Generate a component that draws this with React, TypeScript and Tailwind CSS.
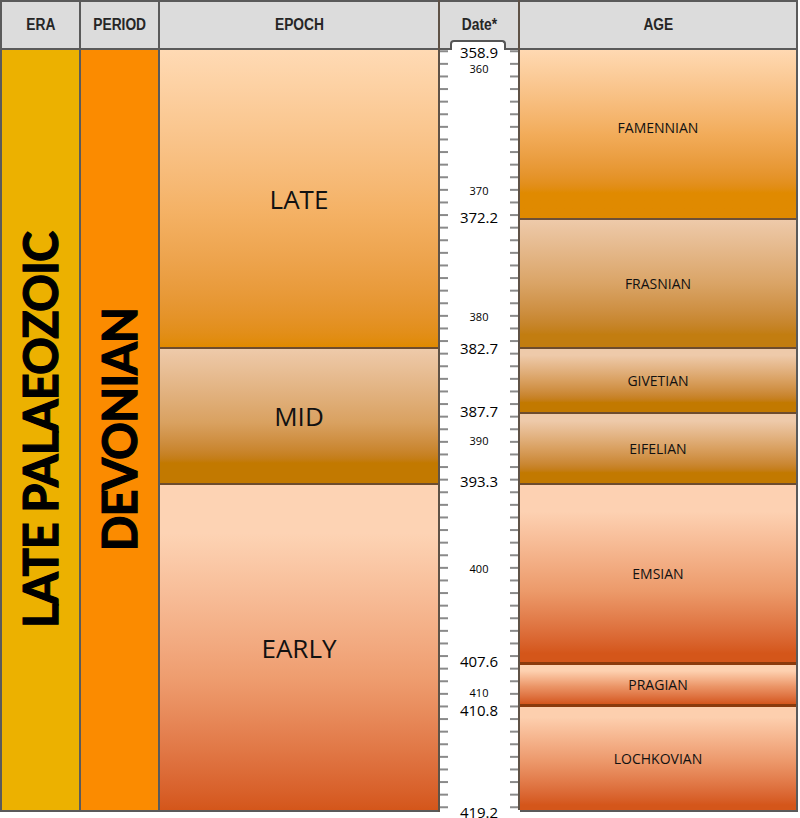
import React from "react";

const BORDER = "border-[#5a5a5a]";

type Seg = { name: string; cls: string };

const epochs: Seg[] = [
  { name: "LATE", cls: "h-[297px] bg-linear-to-b from-[#ffdab4] via-[#f4b164] via-55% to-[#e08a00]" },
  { name: "MID", cls: "h-[136px] border-t-2 border-[#6d4c2e] bg-linear-to-b from-[#eecaaa] via-[#d9a160] via-55% to-[#c27900] to-85%" },
  { name: "EARLY", cls: "h-[327px] border-t-2 border-[#6d4c2e] bg-linear-to-b from-[#fdd3b4] from-15% via-[#ee9c6e] via-60% to-[#d4561a]" },
];

const ages: Seg[] = [
  { name: "FAMENNIAN", cls: "h-[168px] pb-[12px] bg-linear-to-b from-[#ffd9b2] via-[#f2ac5a] via-50% to-[#e08a00] to-85%" },
  { name: "FRASNIAN", cls: "h-[129px] border-t-2 border-[#6d5038] bg-linear-to-b from-[#eecaaa] via-[#daa466] via-50% to-[#c27d10] to-90%" },
  { name: "GIVETIAN", cls: "h-[65px] border-t-2 border-[#6d4c2e] bg-linear-to-b from-[#eecaaa] from-10% via-[#d9a060] via-50% to-[#c27900] to-85%" },
  { name: "EIFELIAN", cls: "h-[71px] border-t-2 border-[#6d4c2e] bg-linear-to-b from-[#eecaaa] from-10% via-[#d9a060] via-50% to-[#c27900] to-85%" },
  { name: "EMSIAN", cls: "h-[179px] border-t-2 border-[#6d4c2e] bg-linear-to-b from-[#fdd1b2] from-15% via-[#ec9a6a] via-60% to-[#d4561a] to-95%" },
  { name: "PRAGIAN", cls: "h-[42px] border-t-[3px] border-[#8a3a0c] bg-linear-to-b from-[#fdd1b0] from-15% via-[#eb9567] via-55% to-[#d4561a]" },
  { name: "LOCHKOVIAN", cls: "h-[106px] border-t-[3px] border-[#8a3a0c] bg-linear-to-b from-[#fdcfae] from-10% via-[#eb9567] via-55% to-[#d4561a] to-95%" },
];

const dateLabels: { t: string; big: boolean; cls: string }[] = [
  { t: "358.9", big: true, cls: "top-[52px]" },
  { t: "360", big: false, cls: "top-[68px]" },
  { t: "370", big: false, cls: "top-[190px]" },
  { t: "372.2", big: true, cls: "top-[217px]" },
  { t: "380", big: false, cls: "top-[316px]" },
  { t: "382.7", big: true, cls: "top-[348px]" },
  { t: "387.7", big: true, cls: "top-[411px]" },
  { t: "390", big: false, cls: "top-[440px]" },
  { t: "393.3", big: true, cls: "top-[481px]" },
  { t: "400", big: false, cls: "top-[568px]" },
  { t: "407.6", big: true, cls: "top-[661px]" },
  { t: "410", big: false, cls: "top-[692px]" },
  { t: "410.8", big: true, cls: "top-[710px]" },
  { t: "419.2", big: true, cls: "top-[812px]" },
];

const ticks: number[] = [];
for (let v = 359; v <= 419; v++) ticks.push((v - 358.9) * 12.6);

function Header({ label }: { label: string }) {
  return (
    <div className={`h-[50px] border-t-2 border-b-2 ${BORDER} bg-[#dcdcdc] flex items-center justify-center`}>
      <span className="inline-block scale-x-[0.86] font-['Liberation_Sans',Arial,sans-serif] font-bold text-[16px] text-[#262626]">
        {label}
      </span>
    </div>
  );
}

const vertical =
  "[writing-mode:vertical-rl] rotate-180 font-['Lato',sans-serif] font-bold text-[47px] leading-none tracking-[-1px] text-black whitespace-nowrap [-webkit-text-stroke:1.2px_black]";

export default function App() {
  return (
    <div className="w-[800px] h-[818px] bg-white overflow-hidden font-['Open_Sans',sans-serif] text-[#111]">
      <div className={`flex w-[798px] border-l-2 ${BORDER}`}>
        {/* ERA */}
        <div className={`w-[79px] border-r-2 ${BORDER} flex flex-col`}>
          <Header label="ERA" />
          <div className={`h-[762px] border-b-2 ${BORDER} bg-[#ecb100] flex items-center justify-center`}>
            <span className={vertical}>LATE PALAEOZOIC</span>
          </div>
        </div>
        {/* PERIOD */}
        <div className={`w-[79px] border-r-2 ${BORDER} flex flex-col`}>
          <Header label="PERIOD" />
          <div className={`h-[762px] border-b-2 ${BORDER} bg-[#fb8b00] flex items-center justify-center`}>
            <span className={vertical}>DEVONIAN</span>
          </div>
        </div>
        {/* EPOCH */}
        <div className="w-[280px] border-r-2 border-[#5f5246] flex flex-col">
          <Header label="EPOCH" />
          <div className={`h-[762px] border-b-2 ${BORDER} flex flex-col`}>
            {epochs.map((e) => (
              <div key={e.name} className={`${e.cls} flex items-center justify-center`}>
                <span className="text-[26px] leading-none text-[#111]">{e.name}</span>
              </div>
            ))}
          </div>
        </div>
        {/* DATE */}
        <div className="relative w-[80px] h-[810px] border-r-2 border-[#5f5246] flex flex-col">
          <div className={`relative h-[50px] border-t-2 border-b-2 ${BORDER} bg-[#dcdcdc] flex justify-center pt-[15px]`}>
            <span className="inline-block scale-x-[0.86] font-['Liberation_Sans',Arial,sans-serif] font-bold text-[16px] leading-none text-[#262626] h-fit">
              Date*
            </span>
            <div className="absolute left-[10px] bottom-[-2px] w-[56px] h-[10px] bg-white border-2 border-b-0 border-[#555] rounded-t-[4px]" />
          </div>
          <div className="h-[760px] bg-white">
            <svg width="78" height="760" viewBox="0 0 78 760" className="block">
              {ticks.map((y, i) => (
                <g key={i} stroke="#8a8a8a" strokeWidth="2">
                  <line x1="0" y1={y} x2="8" y2={y} />
                  <line x1="70" y1={y} x2="78" y2={y} />
                </g>
              ))}
            </svg>
          </div>
          {dateLabels.map((d) => (
            <span
              key={d.t}
              className={`absolute left-0 right-0 text-center leading-none -translate-y-1/2 text-black ${d.cls} ${
                d.big ? "text-[15px]" : "text-[11px]"
              }`}
            >
              {d.t}
            </span>
          ))}
        </div>
        {/* AGE */}
        <div className={`w-[278px] border-r-2 ${BORDER} flex flex-col`}>
          <Header label="AGE" />
          <div className={`h-[762px] border-b-2 ${BORDER} flex flex-col`}>
            {ages.map((a) => (
              <div key={a.name} className={`${a.cls} flex items-center justify-center`}>
                <span className="text-[14px] leading-none text-[#111]">{a.name}</span>
              </div>
            ))}
          </div>
        </div>
      </div>
    </div>
  );
}
